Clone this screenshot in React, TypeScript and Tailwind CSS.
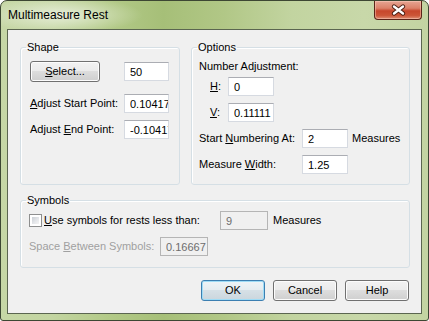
import React from "react";

const U = ({ c }: { c: string }) => <span className="underline">{c}</span>;

const inputBase =
  "h-[19px] border pl-[5px] pr-0 text-[11px] leading-[17px] outline-none overflow-hidden";
const inputOn = inputBase + " bg-white text-black border-[#d6dae1] border-t-[#abadb3]";
const inputOff = inputBase + " bg-[#f0f0f0] text-[#6d6d6d] border-[#b5b5b5]";

const btnBase =
  "h-[21px] w-[64px] rounded-[3px] border text-[11px] text-black flex items-center justify-center";
const btnNormal =
  btnBase +
  " border-[#707070] bg-[linear-gradient(to_bottom,#f2f2f2_0%,#ebebeb_50%,#dddddd_50%,#cfcfcf_100%)] shadow-[inset_0_0_0_1px_#fcfcfc]";
const btnDefault =
  btnBase +
  " border-[#3c7fb1] bg-[linear-gradient(to_bottom,#eef4f7_0%,#e5ecf0_50%,#d6e0e6_50%,#cbd6dd_100%)] shadow-[inset_0_0_0_1px_#9fdcf6]";

export default function App() {
  return (
    <div className="w-[429px] h-[321px] border border-[#3d4733] rounded-t-[7px] rounded-b-[3px] bg-[linear-gradient(90deg,#c6d7a6_0%,#c3d5a1_12%,#b3ca88_25%,#a6bf78_38%,#b1c786_52%,#c2d4a0_68%,#c8d8a9_85%,#c3d4a2_100%)] flex flex-col font-['Liberation_Sans',Arial,sans-serif] overflow-hidden">
      {/* Title bar */}
      <div className="h-[28px] flex justify-between pl-[7px] pr-[6px] bg-[radial-gradient(ellipse_80px_18px_at_62px_14px,rgba(255,255,255,0.6),rgba(255,255,255,0))]">
        <div className="text-[12px] leading-[28px] text-black">Multimeasure Rest</div>
        <div className="self-start h-[19px] w-[48px] rounded-b-[4px] border border-t-0 border-[#5a2418] bg-[linear-gradient(to_bottom,#e7a593_0%,#dc8169_40%,#c7472c_55%,#cc5537_80%,#df8f74_100%)] shadow-[inset_0_0_0_1px_rgba(255,215,200,0.45)] flex items-center justify-center">
          <svg width="15" height="12" viewBox="0 0 15 12">
            <path d="M3 2.5 L12 9.5 M12 2.5 L3 9.5" stroke="#4a1d12" strokeWidth="4.2" strokeLinecap="round" fill="none" />
            <path d="M3 2.5 L12 9.5 M12 2.5 L3 9.5" stroke="#ffffff" strokeWidth="2.4" strokeLinecap="round" fill="none" />
          </svg>
        </div>
      </div>

      {/* Client area */}
      <div className="mx-[6px] mb-[6px] h-[285px] border border-[#5b6650] bg-[#f0f0f0] pt-[11px] pl-[12px] pr-[11px] text-[11px] leading-[13px] text-black">
        <div className="flex gap-[11px]">
          {/* Shape */}
          <fieldset className="w-[160px] h-[144px] border border-[#d5dfe5] rounded-[3px] shadow-[inset_1px_1px_0_#ffffff] min-w-0">
            <legend className="ml-[5px] px-[1px] leading-[13px]">Shape</legend>
            <div className="pl-[9px] pt-[7px]">
              <div className="flex items-center">
                <button className={btnNormal + " w-[70px] h-[20px]"}>
                  <span>
                    <U c="S" />elect...
                  </span>
                </button>
                <input readOnly value="50" className={inputOn + " ml-[24px] w-[45px]"} />
              </div>
              <div className="flex items-center mt-[12px]">
                <span className="w-[94px]">
                  <U c="A" />djust Start Point:
                </span>
                <input readOnly value="0.10417" className={inputOn + " w-[45px]"} />
              </div>
              <div className="flex items-center mt-[7px]">
                <span className="w-[94px]">
                  Adjust <U c="E" />nd Point:
                </span>
                <input readOnly value="-0.10417" className={inputOn + " w-[45px]"} />
              </div>
            </div>
          </fieldset>

          {/* Options */}
          <fieldset className="w-[219px] h-[144px] border border-[#d5dfe5] rounded-[3px] shadow-[inset_1px_1px_0_#ffffff] min-w-0">
            <legend className="ml-[5px] px-[1px] leading-[13px]">Options</legend>
            <div className="pl-[7px] pt-[6px]">
              <div>Number Adjustment:</div>
              <div className="flex items-center mt-[4px] pl-[11px]">
                <span className="w-[18px]">
                  <U c="H" />:
                </span>
                <input readOnly value="0" className={inputOn + " w-[46px]"} />
              </div>
              <div className="flex items-center mt-[7px] pl-[11px]">
                <span className="w-[18px]">
                  <U c="V" />:
                </span>
                <input readOnly value="0.11111" className={inputOn + " w-[46px]"} />
              </div>
              <div className="flex items-center mt-[7px]">
                <span className="w-[103px]">
                  Start <U c="N" />umbering At:
                </span>
                <input readOnly value="2" className={inputOn + " w-[46px]"} />
                <span className="ml-[4px]">Measures</span>
              </div>
              <div className="flex items-center mt-[7px]">
                <span className="w-[103px]">
                  Measure <U c="W" />idth:
                </span>
                <input readOnly value="1.25" className={inputOn + " w-[46px]"} />
              </div>
            </div>
          </fieldset>
        </div>

        {/* Symbols */}
        <fieldset className="mt-[9px] w-[390px] h-[74px] border border-[#d5dfe5] rounded-[3px] shadow-[inset_1px_1px_0_#ffffff] min-w-0">
          <legend className="ml-[5px] px-[1px] leading-[13px]">Symbols</legend>
          <div className="pl-[8px] pt-[4px]">
            <div className="flex items-center">
              <div className="w-[13px] h-[13px] border border-[#8e8f8f] bg-white p-[2px]">
                <div className="w-full h-full bg-[linear-gradient(135deg,#cbcfd5_0%,#e6e8eb_60%,#f4f4f4_100%)]" />
              </div>
              <span className="ml-[2px] w-[176px]">
                <U c="U" />se symbols for rests less than:
              </span>
              <input readOnly value="9" className={inputOff + " w-[48px]"} />
              <span className="ml-[5px]">Measures</span>
            </div>
            <div className="flex items-center mt-[7px]">
              <span className="w-[131px] text-[#a0a0a0]">
                Space <U c="B" />etween Symbols:
              </span>
              <input readOnly value="0.16667" className={inputOff + " w-[48px]"} />
            </div>
          </div>
        </fieldset>

        {/* Buttons */}
        <div className="mt-[12px] flex justify-end gap-[8px] pr-[1px]">
          <button className={btnDefault}>OK</button>
          <button className={btnNormal}>Cancel</button>
          <button className={btnNormal}>Help</button>
        </div>
      </div>
    </div>
  );
}
